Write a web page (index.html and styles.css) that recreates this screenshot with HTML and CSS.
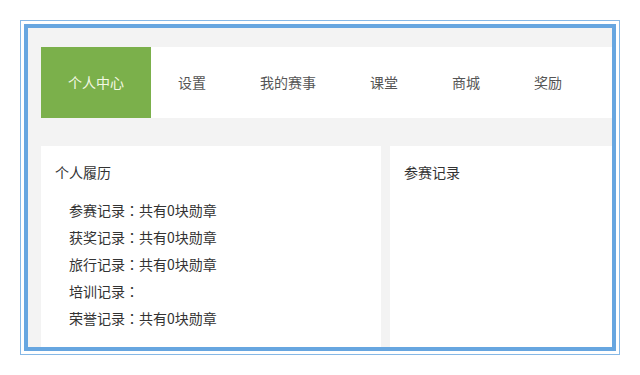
FILE: index.html
```html
<!DOCTYPE html>
<html lang="zh-CN">
<head>
    <meta charset="UTF-8">
    <meta name="viewport" content="width=device-width, initial-scale=1.0">
    <title>个人中心</title>
    <link rel="stylesheet" href="styles.css">
</head>
<body>
    <div class="frame">
        <div class="frame-inner">
            <div class="content">
                <!-- Top navigation -->
                <ul class="nav">
                    <li class="active">个人中心</li>
                    <li>设置</li>
                    <li>我的赛事</li>
                    <li>课堂</li>
                    <li>商城</li>
                    <li>奖励</li>
                </ul>

                <!-- Cards -->
                <div class="cards">
                    <div class="card card-left">
                        <div class="card-title">个人履历</div>
                        <ul class="record-list">
                            <li>参赛记录<span class="colon" lang="zh-TW">：</span>共有0块勋章</li>
                            <li>获奖记录<span class="colon" lang="zh-TW">：</span>共有0块勋章</li>
                            <li>旅行记录<span class="colon" lang="zh-TW">：</span>共有0块勋章</li>
                            <li>培训记录<span class="colon" lang="zh-TW">：</span></li>
                            <li>荣誉记录<span class="colon" lang="zh-TW">：</span>共有0块勋章</li>
                        </ul>
                    </div>
                    <div class="card card-right">
                        <div class="card-title">参赛记录</div>
                    </div>
                </div>
            </div>
        </div>
    </div>
</body>
</html>
```

FILE: styles.css
```css
body {
    font-family: "Noto Sans CJK SC", "Noto Sans", sans-serif;
    background-color: #fff;
    margin: 0;
    padding: 20px;
}

.frame {
    width: 592px;
    height: 327px;
    border: 1px solid #86b8e6;
    padding: 3px;
}

.frame-inner {
    height: 319px;
    border: 4px solid #67a6e0;
    overflow: hidden;
}

.content {
    height: 100%;
    background-color: #f3f3f3;
    padding: 19px 0 0 13px;
    box-sizing: border-box;
    display: flex;
    flex-direction: column;
}

.nav {
    list-style: none;
    margin: 0;
    padding: 0;
    display: flex;
    background-color: #fff;
    height: 71px;
    flex-shrink: 0;
}

.nav li {
    padding: 0 27px;
    line-height: 71px;
    font-size: 14px;
    color: #555;
    white-space: nowrap;
}

.nav li.active {
    background-color: #7bb04b;
    color: #f4f8e4;
}

.cards {
    margin-top: 28px;
    display: flex;
    gap: 9px;
    flex: 1;
}

.card {
    background-color: #fff;
    padding: 15px 14px;
    font-size: 14px;
    color: #333;
}

.card-left {
    width: 340px;
    box-sizing: border-box;
    flex-shrink: 0;
}

.card-right {
    flex: 1;
}

.card-title {
    line-height: 22px;
}

.record-list {
    list-style: none;
    margin: 14px 0 0;
    padding-left: 14px;
}

.record-list li {
    line-height: 27px;
}

/* centred full-width colon, as in the original font */
.colon {
    font-family: "Noto Sans CJK TC", sans-serif;
}
```
